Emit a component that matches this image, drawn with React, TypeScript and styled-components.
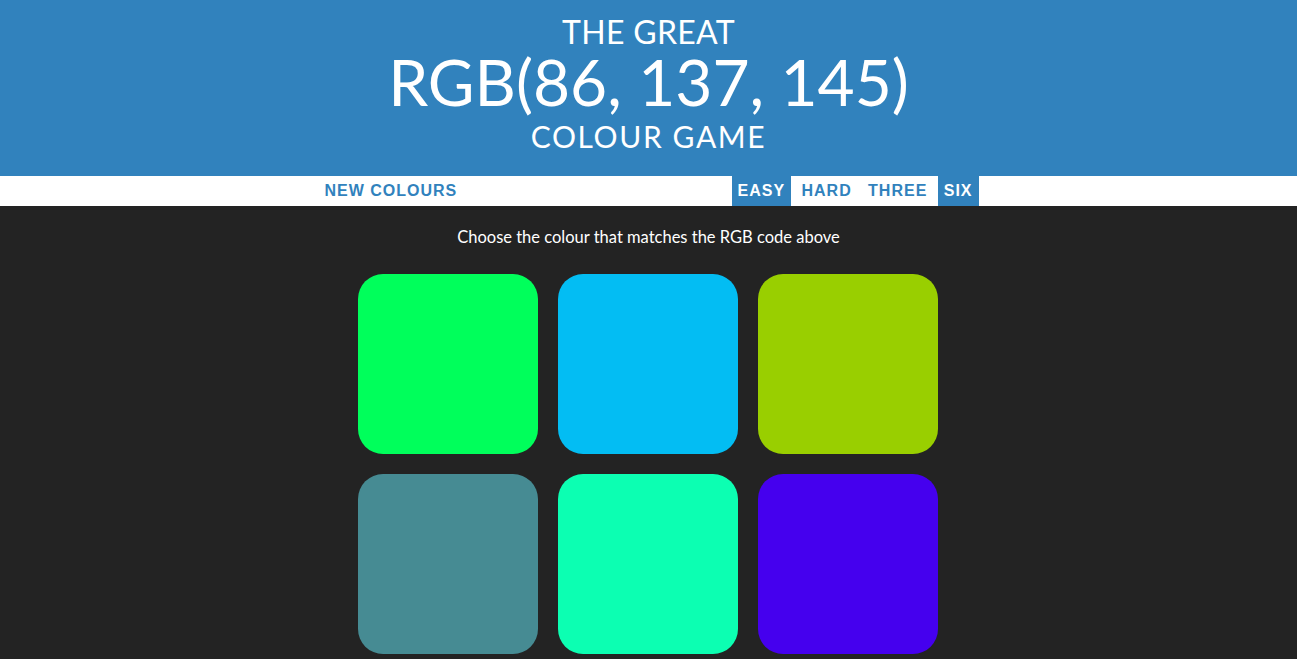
import React from "react";
import styled, { createGlobalStyle } from "styled-components";

const Global = createGlobalStyle`
  html, body { margin: 0; padding: 0; background: #232323; }
  body { font-family: "Lato", "Noto Sans", sans-serif; }
`;

const Header = styled.header`
  background: #3182bd;
  color: #fff;
  text-align: center;
  padding: 12px 0 15px;
`;

const Title = styled.h1`
  margin: 0;
  font-weight: 400;
  text-transform: uppercase;
`;

const TitleLine = styled.span<{ $size: number; $lh: number; $ls?: number }>`
  display: block;
  font-size: ${(p) => p.$size}px;
  line-height: ${(p) => p.$lh}px;
  letter-spacing: ${(p) => p.$ls ?? 0}px;
`;

const NavStripe = styled.nav`
  background: #fff;
  height: 30px;
`;

const NavInner = styled.div`
  width: 660px;
  margin: 0 auto;
  display: flex;
  justify-content: space-between;
  height: 100%;
`;

const NavButton = styled.button<{ $active?: boolean }>`
  border: none;
  margin: 0;
  height: 30px;
  padding: 0 6px;
  font-family: "Liberation Sans", Arial, sans-serif;
  font-weight: 700;
  font-size: 16px;
  letter-spacing: 1px;
  line-height: 30px;
  text-transform: uppercase;
  cursor: pointer;
  background: ${(p) => (p.$active ? "#3182bd" : "#fff")};
  color: ${(p) => (p.$active ? "#fff" : "#3182bd")};
`;

const Modes = styled.div`
  display: flex;
  gap: 4.4px;
`;

const Main = styled.main`
  padding-top: 20px;
  color: #fff;
  text-align: center;
`;

const Message = styled.p`
  margin: 0;
  font-size: 16.5px;
  line-height: 22px;
`;

const Grid = styled.div`
  display: grid;
  grid-template-columns: repeat(3, 180px);
  gap: 20px;
  width: 581px;
  margin: 26px auto 0;
`;

const Square = styled.div`
  width: 180px;
  height: 180px;
  border-radius: 25px;
`;

const colours = [
  "#00ff5b",
  "#03bdf3",
  "#99cf00",
  "#468b93",
  "#0cffb2",
  "#4500ee",
];

export default function App() {
  return (
    <>
      <Global />
      <Header>
        <Title>
          <TitleLine $size={32} $lh={40} $ls={0.3}>The Great</TitleLine>
          <TitleLine $size={64} $lh={60}>RGB(86, 137, 145)</TitleLine>
          <TitleLine $size={30} $lh={49} $ls={1.6}>Colour Game</TitleLine>
        </Title>
      </Header>
      <NavStripe>
        <NavInner>
          <NavButton>New Colours</NavButton>
          <Modes>
            <NavButton $active>Easy</NavButton>
            <NavButton>Hard</NavButton>
            <NavButton>Three</NavButton>
            <NavButton $active>Six</NavButton>
          </Modes>
        </NavInner>
      </NavStripe>
      <Main>
        <Message>Choose the colour that matches the RGB code above</Message>
        <Grid>
          {colours.map((c) => (
            <Square key={c} style={{ background: c }} />
          ))}
        </Grid>
      </Main>
    </>
  );
}
